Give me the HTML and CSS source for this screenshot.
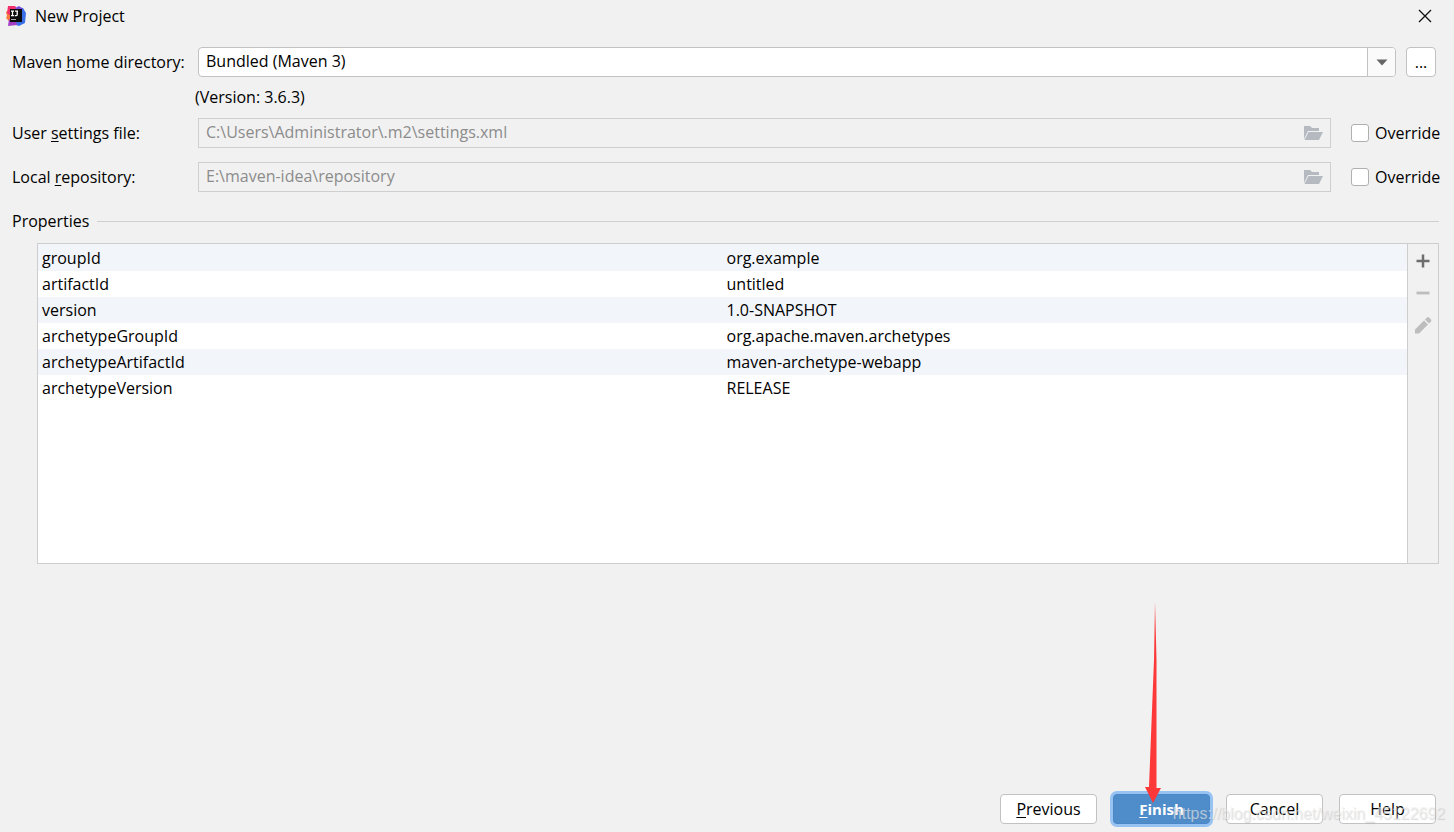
FILE: index.html
```html
<!DOCTYPE html>
<html lang="en">
<head>
<meta charset="utf-8">
<title>New Project</title>
<link rel="stylesheet" href="styles.css">
</head>
<body>
<div class="dialog">
  <header class="titlebar">
    <svg class="logo" width="20" height="20" viewBox="0 0 20 20" aria-hidden="true">
      <path fill="#f97a3d" d="M0 6l5-4 4 6-1 8-5-1-3-3 1-2z"/>
      <path fill="#f2306c" d="M2 0h7l4 5-7 6-5-4z"/>
      <path fill="#3b6fe8" d="M12 1l5 1 3 5-1 10-6 3-6-2-1-5 9-2z"/>
      <path fill="#a33fc4" d="M3 13l7 2 1 4-9 1z"/>
      <path fill="#7c4be0" d="M9 2l4-2 4 3-3 3z"/>
      <path fill="#0b0b0d" d="M4 3h12v13H4z"/>
      <path fill="none" stroke="#fff" stroke-width="1.3" d="M5 5.200h3M6.500 5.200v4.500M5 9.700h3M9 5.200h3M11.200 5v3.500q0 1.200-1.200 1.200H8.800"/>
      <path stroke="#aaa" d="M5 13.500h5"/>
    </svg>
    <h1 class="title">New Project</h1>
    <button class="close" type="button" aria-label="Close">
      <svg width="14" height="14" viewBox="0 0 14 14"><path d="M1 1l12 12M13 1L1 13" stroke="#111" stroke-width="1.3"/></svg>
    </button>
  </header>
  <main class="content">
    <div class="row">
      <label class="label" for="home">Maven <u>h</u>ome directory:</label>
      <div class="combo">
        <input id="home" class="combo-text" type="text" value="Bundled (Maven 3)">
        <button class="combo-arrow" type="button" aria-label="Show options">
          <svg width="12" height="7" viewBox="0 0 12 7"><path d="M0.500 0.500h11L6 6.500z" fill="#666"/></svg>
        </button>
      </div>
      <button class="browse" type="button" aria-label="Browse">...</button>
    </div>
    <p class="version">(Version: 3.6.3)</p>
    <div class="row settings">
      <label class="label" for="settings">User <u>s</u>ettings file:</label>
      <div class="path">
        <input id="settings" class="path-text" type="text" value="C:\Users\Administrator\.m2\settings.xml" disabled>
        <svg width="20" height="16" viewBox="0 0 20 16"><path fill="#b4babf" d="M1 14V1h6l2 2h7v3H5zM5.500 7H20l-4 8H1.500z"/></svg>
      </div>
      <label class="override"><input class="check" type="checkbox">Override</label>
    </div>
    <div class="row repository">
      <label class="label" for="repo">Local <u>r</u>epository:</label>
      <div class="path">
        <input id="repo" class="path-text" type="text" value="E:\maven-idea\repository" disabled>
        <svg width="20" height="16" viewBox="0 0 20 16"><path fill="#b4babf" d="M1 14V1h6l2 2h7v3H5zM5.500 7H20l-4 8H1.500z"/></svg>
      </div>
      <label class="override"><input class="check" type="checkbox">Override</label>
    </div>
    <h2 class="section">Properties</h2>
    <div class="properties">
      <div class="list">
        <table class="table">
          <tr><td>groupId</td><td>org.example</td></tr>
          <tr><td>artifactId</td><td>untitled</td></tr>
          <tr><td>version</td><td>1.0-SNAPSHOT</td></tr>
          <tr><td>archetypeGroupId</td><td>org.apache.maven.archetypes</td></tr>
          <tr><td>archetypeArtifactId</td><td>maven-archetype-webapp</td></tr>
          <tr><td>archetypeVersion</td><td>RELEASE</td></tr>
        </table>
      </div>
      <div class="tools">
        <button class="tool" type="button" aria-label="Add"><svg width="20" height="20" viewBox="0 0 20 20"><path d="M3.500 10h13M10 3.500v13" stroke="#6e6e6e" stroke-width="2.500"/></svg></button>
        <button class="tool" type="button" aria-label="Remove" disabled><svg width="20" height="20" viewBox="0 0 20 20"><path d="M3.500 10h13" stroke="#bdbdbd" stroke-width="2.800"/></svg></button>
        <button class="tool" type="button" aria-label="Edit" disabled><svg width="20" height="20" viewBox="0 0 20 20"><path fill="#bdbdbd" d="M2 14.500L11 5.500l4 4L6 18.500H2zM12 4.500l2-2q1-.8 2 0l2 2q.8 1 0 2l-2 2z"/></svg></button>
      </div>
    </div>
  </main>
  <footer class="footer">
    <button class="button" type="button"><u>P</u>revious</button>
    <button class="button primary" type="button"><u>F</u>inish</button>
    <button class="button" type="button">Cancel</button>
    <button class="button" type="button">Help</button>
    <svg class="pointer" width="20" height="204" viewBox="0 0 20 204" aria-hidden="true"><path fill="#fd3838" d="M11 2L12.500 60V188L17 188L9 203L1 187L5 187L8 110L10 60z"/></svg>
    <span class="watermark">https://blog.csdn.net/weixin_45122692</span>
  </footer>
</div>
</body>
</html>
```
FILE: styles.css
```css
* { box-sizing: border-box; }

body {
  margin: 0;
  background: #f1f1f1;
  color: #000;
  font: 16px/20px "Open Sans", "Noto Sans", sans-serif;
}

button, input { font: inherit; color: inherit; }
button { padding: 0; }
h1, h2, p { margin: 0; font-size: inherit; font-weight: 400; }
svg { display: block; }
u { text-underline-offset: 2px; }

.dialog { display: flex; flex-direction: column; min-height: 100vh; }

.titlebar { display: flex; align-items: center; height: 32px; padding: 0 20px 0 6px; }
.title { flex: 1; margin-left: 9px; }
.close { display: grid; place-items: center; width: 18px; height: 18px; border: 0; background: none; }

.content { flex: 1; padding: 15px 15px 0 12px; }
.row { display: flex; align-items: center; height: 30px; }
.label { width: 186px; flex: none; }

.combo {
  display: flex;
  flex: 1;
  height: 30px;
  overflow: hidden;
  border: 1px solid #c2c2c2;
  border-radius: 4px;
  background: #fff;
}
.combo-text { flex: 1; min-width: 0; padding: 0 7px 2px; border: 0; background: none; }
.combo-arrow { display: grid; place-items: center; width: 28px; border: 0; border-left: 1px solid #c2c2c2; background: #fafafa; }
.browse { width: 30px; height: 30px; margin: 0 3px 0 10px; border: 1px solid #c2c2c2; border-radius: 4px; background: #fff; }

.version { margin: 10px 0 0 183px; }
.settings { margin-top: 11px; }
.repository { margin-top: 14px; }

.path { display: flex; flex: 1; align-items: center; height: 30px; padding-right: 7px; border: 1px solid #cfcfcf; }
.path-text { flex: 1; min-width: 0; padding: 0 7px 2px; border: 0; background: none; color: #8c8c8c; }
.override { display: flex; align-items: center; width: 88px; margin-left: 20px; white-space: nowrap; }
.check { appearance: none; flex: none; width: 18px; height: 18px; margin: 0 6px 0 0; border: 1px solid #b0b0b0; border-radius: 3px; background: #fff; }

.section { display: flex; align-items: center; gap: 8px; margin-top: 19px; }
.section::after { content: ""; flex: 1; height: 1px; background: #d0d0d0; }

.properties { display: flex; height: 321px; margin: 12px 0 0 25px; border: 1px solid #cdcdcd; }
.list { flex: 1; background: #fff; }
.table { width: 100%; border-collapse: collapse; table-layout: fixed; }
.table td { height: 26px; padding: 0 4px; }
.table tr:first-child td { height: 27px; }
.table tr:nth-child(odd) { background: #f2f5fa; }
.tools { display: flex; flex-direction: column; align-items: center; gap: 12px; width: 31px; padding-top: 7px; border-left: 1px solid #cdcdcd; }
.tool { border: 0; background: none; }

.footer { position: relative; display: flex; justify-content: flex-end; gap: 16px; padding: 0 18px 8px 12px; }
.button { width: 97px; height: 30px; border: 1px solid #c2c2c2; border-radius: 4px; background: #fff; }
.primary { border-color: #4b87c6; background: #4f8cca; box-shadow: 0 0 0 3px #97c3f3; color: #fff; font-size: 15px; font-weight: 700; }
.pointer { position: absolute; right: 290px; bottom: 28px; }
.watermark {
  position: absolute;
  right: 9px;
  bottom: 8px;
  color: rgba(240, 240, 240, 0.6);
  font: 16px/20px "Liberation Sans", sans-serif;
  text-shadow: 1px 1px 1px rgba(120, 120, 120, 0.25);
  pointer-events: none;
}
```
